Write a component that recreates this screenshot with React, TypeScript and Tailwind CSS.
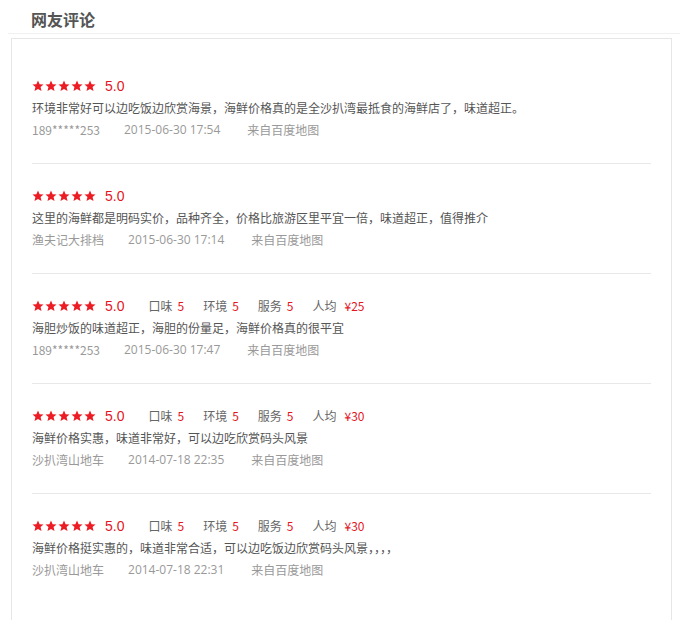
import React from "react";

type Review = {
  text: string;
  user: string;
  date: string;
  detail?: { taste: string; env: string; service: string; avg: string };
};

const reviews: Review[] = [
  {
    text: "环境非常好可以边吃饭边欣赏海景，海鲜价格真的是全沙扒湾最抵食的海鲜店了，味道超正。",
    user: "189*****253",
    date: "2015-06-30 17:54",
  },
  {
    text: "这里的海鲜都是明码实价，品种齐全，价格比旅游区里平宜一倍，味道超正，值得推介",
    user: "渔夫记大排档",
    date: "2015-06-30 17:14",
  },
  {
    text: "海胆炒饭的味道超正，海胆的份量足，海鲜价格真的很平宜",
    user: "189*****253",
    date: "2015-06-30 17:47",
    detail: { taste: "5", env: "5", service: "5", avg: "¥25" },
  },
  {
    text: "海鲜价格实惠，味道非常好，可以边吃欣赏码头风景",
    user: "沙扒湾山地车",
    date: "2014-07-18 22:35",
    detail: { taste: "5", env: "5", service: "5", avg: "¥30" },
  },
  {
    text: "海鲜价格挺实惠的，味道非常合适，可以边吃饭边欣赏码头风景，，，，",
    user: "沙扒湾山地车",
    date: "2014-07-18 22:31",
    detail: { taste: "5", env: "5", service: "5", avg: "¥30" },
  },
];

const font = { fontFamily: '"Microsoft YaHei", "Noto Sans CJK SC", "Liberation Sans", sans-serif' };
const digitFont = { fontFamily: '"Open Sans", "Noto Sans CJK SC", sans-serif' };

function Star() {
  return (
    <svg width="12" height="12" viewBox="0 0 24 24" className="block">
      <path
        d="M12 1l3.2 7.3 7.9.6-6 5.2 1.9 7.8L12 17.8 5 21.9l1.9-7.8-6-5.2 7.9-.6z"
        fill="#ec1c24"
      />
    </svg>
  );
}

function Sub({ label, value, gap = 5 }: { label: string; value: string; gap?: number }) {
  return (
    <span className="flex items-center mr-[19px]">
      <span className="text-[#666]">{label}</span>
      <span className="text-[#e3161f]" style={{ marginLeft: gap }}>
        {value}
      </span>
    </span>
  );
}

export default function App() {
  return (
    <div className="w-[688px] min-h-[620px] bg-white" style={font}>
      <div className="ml-[8px] w-[672px] h-[34px] border-b border-[#f0f0f0] pt-[8px] pl-[23px]">
        <h2 className="text-[16px] leading-[22px] font-bold text-[#555]">网友评论</h2>
      </div>
      <div className="mt-[4px] ml-[11px] w-[661px] min-h-[600px] border border-[#e6e6e6] pt-[15px]">
        {reviews.map((r, i) => (
          <div
            key={i}
            className="mx-[20px] pt-[21px] pb-[22px] border-b border-[#e8e8e8] last:border-b-0"
          >
            <div className="flex items-center h-[22px] text-[12px]">
              <div className="flex gap-[1px]">
                <Star />
                <Star />
                <Star />
                <Star />
                <Star />
              </div>
              <span
                className="ml-[9px] mr-[24px] text-[14px] text-[#e3161f]"
                style={{ fontFamily: '"Liberation Sans", sans-serif' }}
              >
                5.0
              </span>
              {r.detail && (
                <>
                  <Sub label="口味" value={r.detail.taste} />
                  <Sub label="环境" value={r.detail.env} />
                  <Sub label="服务" value={r.detail.service} />
                  <Sub label="人均" value={r.detail.avg} gap={8} />
                </>
              )}
            </div>
            <div className="h-[22px] leading-[22px] text-[12px] text-[#555]">{r.text}</div>
            <div className="flex h-[22px] leading-[22px] text-[12px] text-[#999]">
              <span className="mr-[24px]">{r.user}</span>
              <span className="mr-[27px]" style={digitFont}>
                {r.date}
              </span>
              <span>来自百度地图</span>
            </div>
          </div>
        ))}
      </div>
    </div>
  );
}
